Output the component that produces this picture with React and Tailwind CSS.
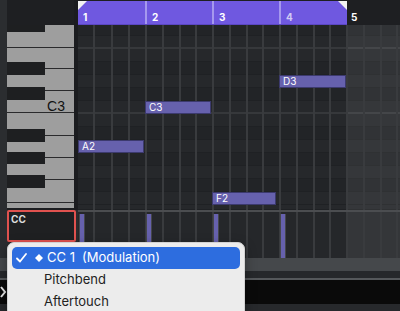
import { useState } from 'react';

// piano roll rows from the top of the roll area (y=25)
const rows = [
  { h: 11, black: true },
  { h: 13, strong: true },
  { h: 13 },
  { h: 13, black: true },
  { h: 13 },
  { h: 13, black: true },
  { h: 13, strong: true },
  { h: 13 },
  { h: 13, black: true },
  { h: 13 },
  { h: 13, black: true },
  { h: 13 },
  { h: 13, black: true },
  { h: 13 },
  { h: 5 },
];

const whiteKeys = [23, 21, 22, 22, 23, 22, 22, 23, 5];
const blackKeys = [
  [0, 7],
  [37, 13],
  [62, 13],
  [104, 13],
  [127, 12],
  [150, 13],
];

const notes = [
  { label: 'A2', x: 0, y: 115, w: 66 },
  { label: 'C3', x: 67, y: 76, w: 66 },
  { label: 'D3', x: 201, y: 50, w: 67 },
  { label: 'F2', x: 134, y: 167, w: 64 },
];

const GridLines = () => (
  <div className="absolute inset-0 flex pointer-events-none">
    {[0, 1, 2, 3, 4].map((bar) => (
      <div
        key={bar}
        className={`w-[67px] shrink-0 flex ${bar === 4 ? 'bg-white/[0.07]' : ''}`}
      >
        {[0, 1, 2, 3].map((beat) => (
          <div
            key={beat}
            className={`flex-1 ${bar === 0 && beat === 0 ? '' : 'border-l-2 border-[#393b3e]'}`}
          />
        ))}
      </div>
    ))}
  </div>
);

const Piano = () => (
  <div className="relative h-[183px] bg-[#9e9e9e]">
    <div className="flex flex-col">
      {whiteKeys.map((h, i) => (
        <div
          key={i}
          style={{ height: h }}
          className={`border-b border-[#2a2a2c] ${i === 8 ? 'border-b-0' : ''} ${
            i === 3 ? 'flex items-end justify-end pr-[9px]' : ''
          }`}
        >
          {i === 3 && (
            <span className="text-[14px] leading-[14px] text-[#111] font-['Liberation_Sans',sans-serif] mb-[-1px]">
              C3
            </span>
          )}
        </div>
      ))}
    </div>
    {blackKeys.map(([top, h], i) => (
      <div
        key={i}
        style={{ top, height: h }}
        className="absolute left-0 w-[38px] bg-[#1e1f21]"
      />
    ))}
  </div>
);

const Header = () => (
  <div className="h-[25px] flex bg-[#1e1f22] pt-[1px]">
    <div className="relative w-[269px] flex bg-[#6f58e0] border-b border-[#5b47c4]">
      {[1, 2, 3, 4].map((n) => (
        <div
          key={n}
          className={`w-[67px] shrink-0 pl-[5px] pt-[10px] text-[10px] leading-[12px] font-bold ${
            n === 4 ? 'text-white/70' : 'text-white'
          } ${n > 1 ? 'border-l-2 border-[#a598ee]' : ''}`}
        >
          {n}
        </div>
      ))}
      <svg className="absolute left-0 top-0" width="9" height="9">
        <polygon points="0,0 9,0 0,9" fill="#f2f2f2" />
      </svg>
      <svg className="absolute right-0 top-0" width="9" height="9">
        <polygon points="0,0 9,0 9,9" fill="#f2f2f2" />
      </svg>
    </div>
    <div className="pl-[4px] pt-[10px] text-[10px] leading-[12px] font-bold text-white">5</div>
  </div>
);

const Roll = () => (
  <div className="relative h-[185px] overflow-hidden">
    <div className="flex flex-col">
      {rows.map((r, i) => (
        <div
          key={i}
          style={{ height: r.h }}
          className={`${r.black ? 'bg-[#222427]' : 'bg-[#26282b]'} ${
            r.strong ? 'border-b-2 border-[#36383b]' : 'border-b border-[#1f2124]'
          }`}
        />
      ))}
    </div>
    <GridLines />
    {notes.map((n) => (
      <div
        key={n.label}
        style={{ left: n.x, top: n.y, width: n.w }}
        className="absolute h-[13px] bg-[#6661ad] border border-[#3c3a6e] pl-[3px] text-[10px] leading-[11px] text-white"
      >
        {n.label}
      </div>
    ))}
  </div>
);

const CCLane = () => (
  <div className="flex h-[48px]">
    <div className="w-[7px] bg-[#2b2d30]" />
    <div className="w-[71px] bg-[#2a2c2e]">
      <div className="h-[32px] w-[69px] border-2 border-[#e0524f] rounded-[2px] bg-[#1f2022] px-[2px] pt-[2px] text-[10px] leading-[10px] font-bold text-[#dcdcdc]">
        CC
      </div>
    </div>
    <div className="flex-1 flex flex-col">
      <div className="h-[2px] bg-[#4b4d50]" />
      <div className="relative flex-1 bg-[#25272a]">
        <GridLines />
        {[1, 68, 135, 202].map((x) => (
          <div
            key={x}
            style={{ left: x }}
            className="absolute top-[2px] bottom-0 w-[6px] bg-[#6661ad] border-x border-[#45474c]"
          />
        ))}
      </div>
    </div>
  </div>
);

const Menu = () => {
  const [active, setActive] = useState(0);
  const items = ['Pitchbend', 'Aftertouch'];
  return (
    <div className="absolute left-[7px] top-[242px] w-[238px] h-[84px] bg-[#ececec] rounded-[7px] border border-[#d2d2d2] shadow-[0_4px_12px_rgba(0,0,0,0.35)] p-[4px] text-[13px]">
      <div
        onMouseEnter={() => setActive(0)}
        className="h-[22px] rounded-[5px] bg-[#2d6ddf] flex items-center text-white"
      >
        <svg className="ml-[4px]" width="11" height="10" viewBox="0 0 11 10">
          <polyline points="1,5.5 4,8.5 10,1" fill="none" stroke="white" strokeWidth="1.8" strokeLinecap="round" strokeLinejoin="round" />
        </svg>
        <svg className="ml-[8px]" width="8" height="8" viewBox="0 0 8 8">
          <polygon points="4,0 8,4 4,8 0,4" fill="white" />
        </svg>
        <span className="ml-[4px] w-[35px]">CC 1</span>
        <span>(Modulation)</span>
      </div>
      {items.map((label) => (
        <div key={label} className="h-[22px] flex items-center pl-[32px] text-[#222]">
          {label}
        </div>
      ))}
    </div>
  );
};

export default function App() {
  return (
    <div className="w-[400px] h-[311px] relative overflow-hidden bg-[#2a2c2e] font-['Inter',sans-serif] select-none">
      <div className="flex h-[210px]">
        <div className="w-[7px] bg-[#2b2d30]" />
        <div className="w-[67px] flex flex-col">
          <div className="h-[25px] bg-[#1e1f22]" />
          <Piano />
          <div className="h-[2px] bg-[#1c1d20]" />
        </div>
        <div className="w-[4px] bg-[#1b1c1f]" />
        <div className="flex-1 flex flex-col">
          <Header />
          <Roll />
        </div>
      </div>
      <CCLane />
      <div className="h-[13px] bg-[#45484b]" />
      <div className="h-[7px] bg-[#26282b]" />
      <div className="h-[2px] bg-[#55585b]" />
      <div className="h-[24px] bg-[#0a0a0a] flex items-center">
        <svg width="7" height="12" viewBox="0 0 7 12">
          <polyline points="1,1 5,6 1,11" fill="none" stroke="#e8e8e8" strokeWidth="2" />
        </svg>
      </div>
      <div className="h-[7px] bg-[#27292c]" />
      <Menu />
    </div>
  );
}
